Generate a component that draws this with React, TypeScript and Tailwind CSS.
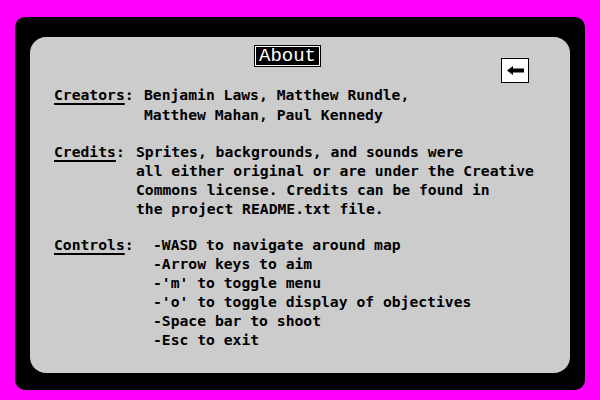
import React from 'react';

const mono = { fontFamily: '"DejaVu Sans Mono", "Liberation Mono", monospace' };

const Label: React.FC<{ text: string; width: string }> = ({ text, width }) => (
  <div className={`${width} shrink-0`}>
    <span className="underline decoration-2 underline-offset-[3px]">{text}</span>:
  </div>
);

const App: React.FC = () => {
  const controls = [
    '-WASD to navigate around map',
    '-Arrow keys to aim',
    "-'m' to toggle menu",
    "-'o' to toggle display of objectives",
    '-Space bar to shoot',
    '-Esc to exit',
  ];

  return (
    <div className="w-[600px] h-[400px] bg-[#ff00ff] pl-[15px] pr-[15px] pt-[17px] pb-[10px]">
      <div className="h-full bg-black rounded-[10px] pl-[15px] pr-[15px] pt-[20px] pb-[17px]">
        <div
          className="h-full bg-[#cccccc] rounded-[16px] pl-[24px] pt-[8px] text-black font-bold text-[14.7px]"
          style={mono}
        >
          {/* Header */}
          <div className="flex items-start">
            <div className="ml-[200px] bg-black p-px">
              <div
                className="border border-white w-[65px] h-[20px] flex items-center justify-center text-white font-normal text-[19px] leading-[18px]"
                style={{ fontFamily: '"Liberation Mono", "Courier New", monospace' }}
              >
                About
              </div>
            </div>
            <button
              type="button"
              className="ml-auto mr-[41px] mt-[13px] w-[28px] h-[25px] bg-white border border-black flex items-center justify-center"
              aria-label="Back"
            >
              <svg width="17" height="9" viewBox="0 0 17 9">
                <polygon points="0,4.5 6,0 6,9" fill="black" />
                <rect x="5" y="2.5" width="12" height="4" fill="black" />
              </svg>
            </button>
          </div>

          {/* Creators */}
          <div className="flex mt-[2px] leading-[20px]">
            <Label text="Creators" width="w-[90px]" />
            <div>
              <div>Benjamin Laws, Matthew Rundle,</div>
              <div>Matthew Mahan, Paul Kennedy</div>
            </div>
          </div>

          {/* Credits */}
          <div className="flex mt-[17px] leading-[19px]">
            <Label text="Credits" width="w-[82px]" />
            <div>
              <div>Sprites, backgrounds, and sounds were</div>
              <div>all either original or are under the Creative</div>
              <div>Commons license. Credits can be found in</div>
              <div>the project README.txt file.</div>
            </div>
          </div>

          {/* Controls */}
          <div className="flex mt-[17px] leading-[19px]">
            <Label text="Controls" width="w-[99px]" />
            <div>
              {controls.map((c) => (
                <div key={c}>{c}</div>
              ))}
            </div>
          </div>
        </div>
      </div>
    </div>
  );
};

export default App;
